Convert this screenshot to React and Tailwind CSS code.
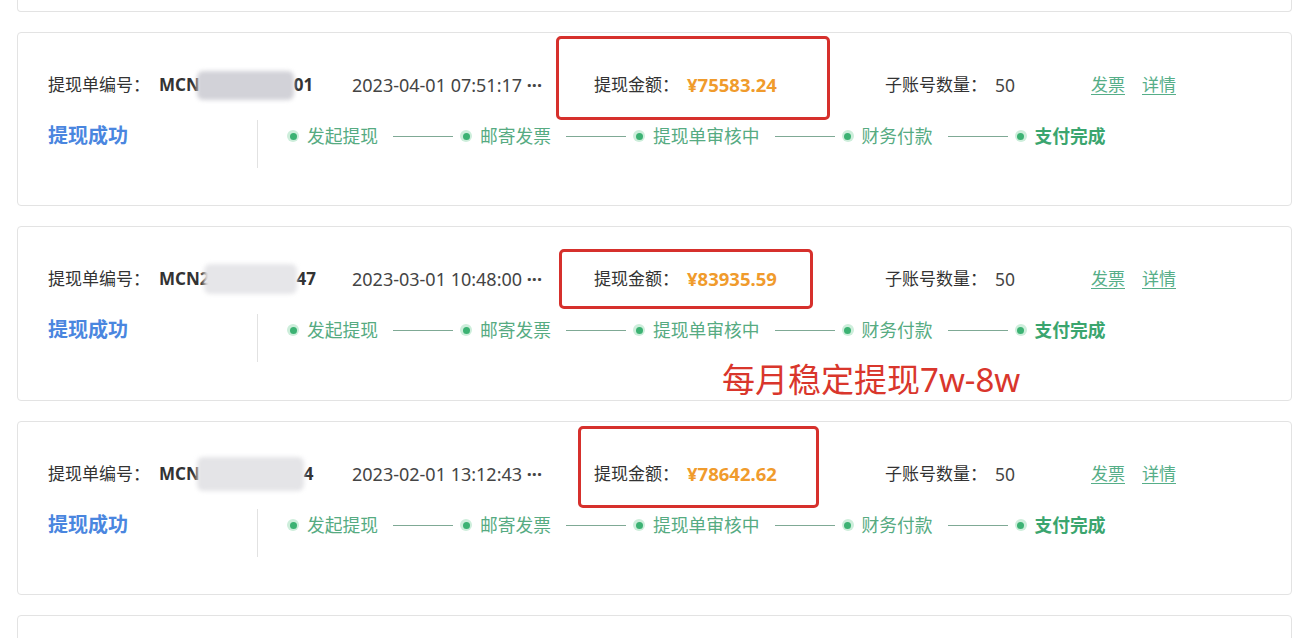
import React from "react";

const steps = ["发起提现", "邮寄发票", "提现单审核中", "财务付款", "支付完成"];

function Steps() {
  return (
    <div className="flex items-center h-[32px]">
      {steps.map((s, i) => {
        const last = i === steps.length - 1;
        return (
          <div key={s} className="flex items-center">
            <span className="w-[12px] h-[12px] rounded-full bg-[#cdeedb] flex items-center justify-center">
              <span className="w-[7px] h-[7px] rounded-full bg-[#3cb273]" />
            </span>
            <span
              className={
                "ml-[8px] text-[17.75px] leading-[32px] " +
                (last ? "font-bold text-[#3aa56e]" : "text-[#56ab82]")
              }
            >
              {s}
            </span>
            {!last && <span className="ml-[15px] mr-[7px] w-[60px] h-px bg-[#7fa995]" />}
          </div>
        );
      })}
    </div>
  );
}

function Card({ idHead, idTail, blurClass, date, amount, boxClass, heightClass, children }) {
  return (
    <div className={"relative bg-white border border-[#e3e3e3] rounded-[4px] pl-[30px] pt-[40px] " + heightClass}>
      <div className="flex items-center h-[24px] text-[17px] text-[#333333]">
        <span className="w-[111px] shrink-0">提现单编号：</span>
        <span className="w-[193px] shrink-0 flex items-center font-bold text-[#333333]">
          <span>{idHead}</span>
          <span className={"inline-block rounded-[6px] blur-[2px] " + blurClass} />
          <span>{idTail}</span>
        </span>
        <span className="w-[242px] shrink-0 text-[#444444] text-[18px]">
          {date} <span className="font-bold">···</span>
        </span>
        <span className="w-[93px] shrink-0">提现金额：</span>
        <span className="w-[198px] shrink-0 font-bold text-[#f09b2c] text-[18.5px]">{amount}</span>
        <span className="w-[110px] shrink-0">子账号数量：</span>
        <span className="w-[96px] shrink-0 text-[#444444] text-[17.5px]">50</span>
        <span className="text-[#56ae88] underline underline-offset-[3px] decoration-[#56ae88]">发票</span>
        <span className="ml-[17px] text-[#56ae88] underline underline-offset-[3px] decoration-[#56ae88]">详情</span>
      </div>
      <div className="flex mt-[23px]">
        <div className="w-[209px] shrink-0 text-[20px] leading-[32px] font-bold text-[#4a86df]">提现成功</div>
        <div className="border-l border-[#e2e2e2] h-[48px] pl-[29px]">
          <Steps />
        </div>
      </div>
      <div className={"absolute border-[3px] border-[#d6302c] rounded-[5px] " + boxClass} />
      {children}
    </div>
  );
}

export default function App() {
  return (
    <div className="w-[1304px] h-[638px] overflow-hidden bg-white font-['Noto_Sans','Noto_Sans_CJK_SC',sans-serif]">
      <div className="flex flex-col gap-[20px] pl-[17px] pr-[12px]">
        <div className="h-[12px] border border-t-0 border-[#e3e3e3] rounded-b-[4px]" />
        <Card
          idHead="MCN"
          idTail="01"
          blurClass="w-[97px] h-[29px] -ml-[3px] bg-[#d2d2d8]"
          date="2023-04-01 07:51:17"
          amount="¥75583.24"
          heightClass="h-[174px]"
          boxClass="left-[538px] top-[3px] w-[274px] h-[84px]"
        />
        <Card
          idHead="MCN2"
          idTail="47"
          blurClass="w-[93px] h-[30px] -ml-[6px] bg-[#e6e6e9]"
          date="2023-03-01 10:48:00"
          amount="¥83935.59"
          heightClass="h-[175px]"
          boxClass="left-[541px] top-[22px] w-[254px] h-[60px]"
        >
          <div className="absolute left-[704px] top-[136px] text-[33px] leading-[33px] text-[#d9362c] whitespace-nowrap">
            每月稳定提现7w-8w
          </div>
        </Card>
        <Card
          idHead="MCN"
          idTail="4"
          blurClass="w-[107px] h-[34px] -ml-[3px] bg-[#e4e4e7]"
          date="2023-02-01 13:12:43"
          amount="¥78642.62"
          heightClass="h-[174px]"
          boxClass="left-[560px] top-[4px] w-[241px] h-[82px]"
        />
        <div className="h-[174px] bg-white border border-[#e3e3e3] rounded-[4px]" />
      </div>
    </div>
  );
}
